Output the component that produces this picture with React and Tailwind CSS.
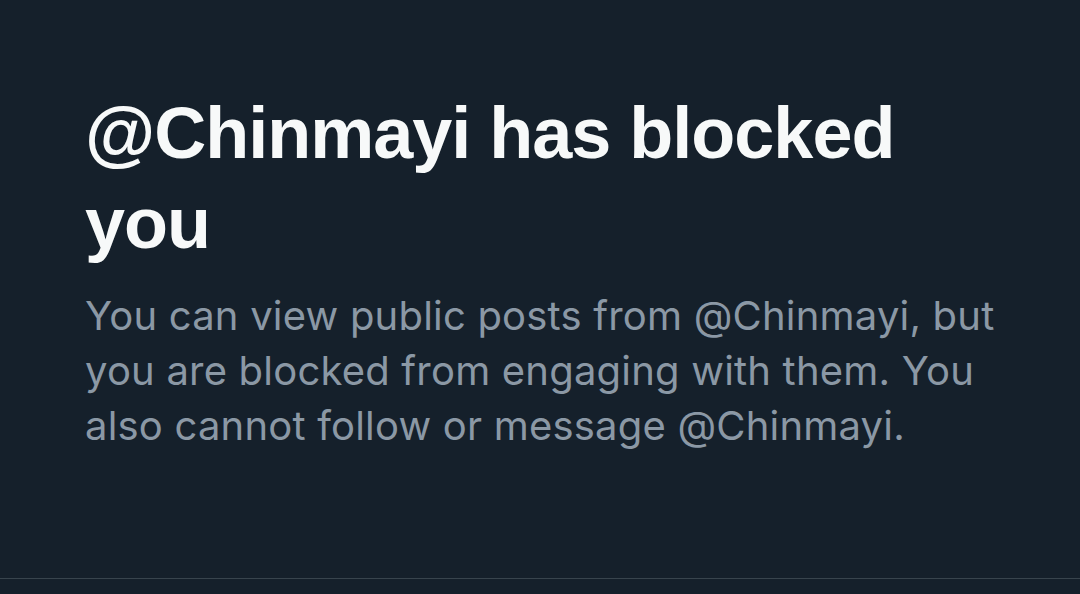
export default function App() {
  return (
    <div className="w-[1080px] h-[594px] bg-[#15202b] flex flex-col overflow-hidden">
      <div className="flex-1 flex flex-col pl-[85px] pr-[60px] pt-[88px]">
        <h1
          className="text-[72px] leading-[90px] font-bold text-[#f7f9f9] tracking-[-1px]"
          style={{ fontFamily: '"Liberation Sans", Arial, sans-serif' }}
        >
          @Chinmayi has blocked you
        </h1>
        <p
          className="mt-[20px] text-[40px] leading-[55px] text-[#8b98a5] tracking-[0.2px]"
          style={{ fontFamily: 'Inter, "Noto Sans", sans-serif' }}
        >
          You can view public posts from @Chinmayi, but you are blocked from engaging with them. You also cannot follow or message @Chinmayi.
        </p>
      </div>
      <div className="h-px bg-[#38444d] mb-[15px]" />
    </div>
  );
}
